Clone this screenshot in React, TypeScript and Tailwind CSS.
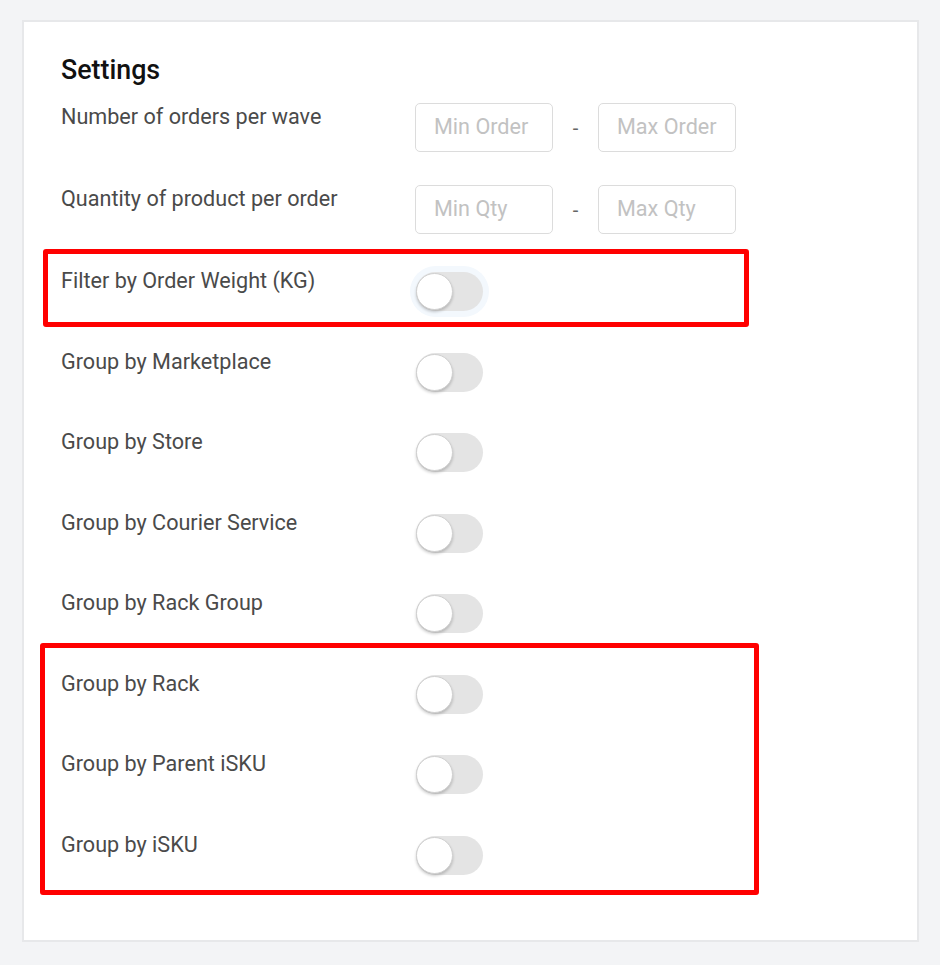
import React from "react";

const toggleRows = [
  "Filter by Order Weight (KG)",
  "Group by Marketplace",
  "Group by Store",
  "Group by Courier Service",
  "Group by Rack Group",
  "Group by Rack",
  "Group by Parent iSKU",
  "Group by iSKU",
];

const Toggle = ({ focused }: { focused?: boolean }) => (
  <div
    className={`relative w-[67px] h-[39px] rounded-full bg-[#e4e4e4] ${
      focused ? "shadow-[0_0_0_6px_#f3f8fd]" : ""
    }`}
  >
    <div className="absolute left-0 top-[1px] w-[37px] h-[37px] rounded-full bg-white border border-[#d0d0d0] shadow-[0_2px_3px_rgba(0,0,0,0.2)]" />
  </div>
);

const RangeRow = ({ label, min, max }: { label: string; min: string; max: string }) => (
  <div className="flex items-start">
    <div className="w-[354px] text-[21.6px] leading-[28px] text-[#4a4a4a]">{label}</div>
    <div className="flex items-center">
      <div className="w-[138px] h-[49px] rounded-[5px] border border-[#dcdcdc] pl-[18px] flex items-center text-[21.6px] text-[#c2c2c2]">
        {min}
      </div>
      <div className="w-[45px] text-center text-[20px] text-[#666]">-</div>
      <div className="w-[138px] h-[49px] rounded-[5px] border border-[#dcdcdc] pl-[18px] flex items-center text-[21.6px] text-[#c2c2c2]">
        {max}
      </div>
    </div>
  </div>
);

export default function App() {
  return (
    <div
      className="min-h-screen bg-[#f3f4f6] pt-[20px] pl-[22px]"
      style={{ fontFamily: "Roboto, 'Liberation Sans', sans-serif" }}
    >
      <div className="relative w-[897px] h-[922px] bg-white border-2 border-[#e7e8ea] pl-[37px] pt-[32px]">
        <h1 className="text-[26.8px] leading-[32px] font-medium text-[#111]">Settings</h1>

        <div className="mt-[17px] flex flex-col gap-[33px]">
          <RangeRow label="Number of orders per wave" min="Min Order" max="Max Order" />
          <RangeRow label="Quantity of product per order" min="Min Qty" max="Max Qty" />
        </div>

        <div className="mt-[33px] flex flex-col gap-[36.5px]">
          {toggleRows.map((label, i) => (
            <div key={label} className="flex items-start h-[44px]">
              <div className="w-[354px] text-[21.6px] leading-[28px] text-[#4a4a4a]">{label}</div>
              <div className="mt-[5px] ml-[1px]">
                <Toggle focused={i === 0} />
              </div>
            </div>
          ))}
        </div>

        {/* annotation boxes */}
        <div className="absolute left-[19px] top-[227px] w-[706px] h-[78px] border-[5px] border-[#ff0000] rounded-[3px]" />
        <div className="absolute left-[16px] top-[621px] w-[719px] h-[252px] border-[5px] border-[#ff0000] rounded-[3px]" />
      </div>
    </div>
  );
}
